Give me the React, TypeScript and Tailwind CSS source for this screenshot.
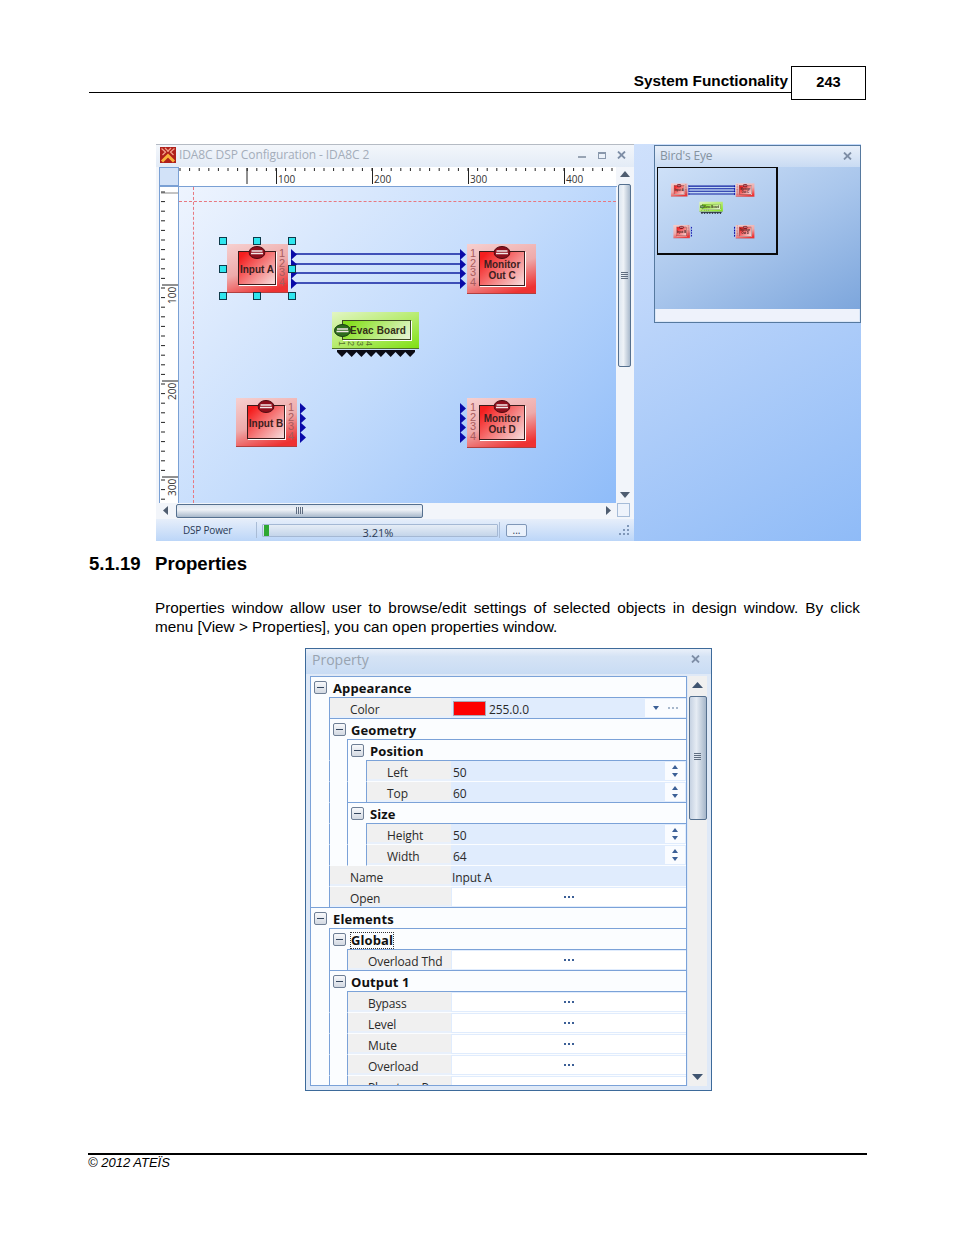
const uiFont = "font-['Open_Sans',sans-serif]";

const POSITION_LINE = "border-[#7ba2d8]";

function Tri({ dir, className }: { dir: "up" | "down" | "left" | "right"; className?: string }) {
  const points = {
    up: "0,6 5,0 10,6",
    down: "0,0 10,0 5,6",
    left: "6,0 6,10 0,5",
    right: "0,0 0,10 6,5",
  }[dir];
  const box = dir === "up" || dir === "down" ? "0 0 10 6" : "0 0 6 10";
  return (
    <svg viewBox={box} className={className} fill="currentColor" preserveAspectRatio="none">
      <polygon points={points} />
    </svg>
  );
}

function CloseX({ className }: { className?: string }) {
  return (
    <svg viewBox="0 0 9 8" className={`w-[9px] h-[8px] ${className ?? ""}`} stroke="currentColor" strokeWidth="1.8" fill="none">
      <path d="M1 0.5l7 7M8 0.5l-7 7" />
    </svg>
  );
}

function Oval({ green, className }: { green?: boolean; className?: string }) {
  return (
    <svg viewBox="0 0 17 13" className={className}>
      <ellipse cx="8.5" cy="6.5" rx="8" ry="6" fill={green ? "#2f6d1e" : "#8e0f1c"} stroke={green ? "#173d10" : "#4d0a10"} />
      <path d="M3 5h11M2.5 7.5h12" stroke="#f4e8e8" strokeWidth="1.4" />
    </svg>
  );
}

function Ports() {
  return (
    <div className="flex flex-col text-[#0a0aa8]">
      {[0, 1, 2, 3].map((i) => (
        <Tri key={i} dir="right" className={`w-[6px] h-[11px] ${i > 0 ? "-mt-[1.4px]" : ""}`} />
      ))}
    </div>
  );
}

type NodeProps = {
  x: number;
  y: number;
  w: number;
  h: number;
  lines: string[];
  side: "left" | "right";
};

// red DSP block, numbers on the side that has the ports
function Block({ x, y, w, h, lines, side }: NodeProps) {
  const nums = (
    <div className="w-[12px] -mt-[2px] flex flex-col items-center text-[11px] leading-[9.6px] text-[#a85c5e] font-['Liberation_Sans',sans-serif]">
      {[1, 2, 3, 4].map((n) => (
        <span key={n}>{n}</span>
      ))}
    </div>
  );
  return (
    <div className="absolute flex items-center" style={{ left: x, top: y, width: w + 20 }}>
      {side === "left" && (
        <div className="absolute -left-[7px] top-[5px]">
          <Ports />
        </div>
      )}
      <div
        className="flex bg-[linear-gradient(162deg,#f6d0d0_0%,#eeaaaa_50%,#ee3232_90%)] border-b border-[#b04040] pt-[7px] pb-[7px]"
        style={{ width: w, height: h }}
      >
        {side === "left" ? nums : <div className="w-[11px]" />}
        <div className="relative flex-1 border border-[#3a1c1c] shadow-[1px_1px_0_#fff] bg-[linear-gradient(135deg,#f51e1e_10%,#f58c8c_60%,#f6dede_100%)] pt-[3px] flex flex-col items-center justify-center text-[10px] leading-[11.5px] font-bold text-[#3c2020] font-['Liberation_Sans',sans-serif]">
          <Oval className="absolute -top-[6px] left-1/2 -translate-x-1/2 w-[17px] h-[13px]" />
          {lines.map((l) => (
            <span key={l}>{l}</span>
          ))}
        </div>
        {side === "right" ? nums : <div className="w-[11px]" />}
      </div>
      {side === "right" && (
        <div className="absolute top-[5px]" style={{ left: w + 3 }}>
          <Ports />
        </div>
      )}
    </div>
  );
}

function EvacBoard({ x, y }: { x: number; y: number }) {
  return (
    <div className="absolute w-[87px]" style={{ left: x, top: y }}>
      <div className="h-[37px] border-b border-[#50702a] bg-[linear-gradient(160deg,#e2f5c4_0%,#b7ec70_50%,#7fe014_100%)] pl-[10px] pr-[8px] pt-[8px]">
        <div className="relative h-[20px] border border-[#3d4a24] shadow-[1px_1px_0_#fff] bg-[linear-gradient(135deg,#86e01e_10%,#eaf5da_100%)] pl-[7px] flex items-center text-[10px] font-bold tracking-[0.1px] text-[#332e18] font-['Liberation_Sans',sans-serif]">
          <Oval green className="absolute -left-[9px] top-[3px] w-[17px] h-[13px]" />
          <span className="whitespace-nowrap">Evac Board</span>
        </div>
      </div>
      <div className="absolute left-[7px] top-[27px] flex gap-[4px] text-[9px] leading-[9px] text-[#56702a] font-['Liberation_Sans',sans-serif]">
        {[1, 2, 3, 4].map((n) => (
          <span key={n} className="rotate-90">
            {n}
          </span>
        ))}
      </div>
      <svg viewBox="0 0 78 7" className="ml-[5px] mt-[1px] w-[78px] h-[7px]" fill="#0b0b14">
        <rect y="0" width="78" height="2" />
        {Array.from({ length: 8 }, (_, i) => (
          <polygon key={i} points={`${i * 9.75},2 ${i * 9.75 + 4.9},7 ${(i + 1) * 9.75},2`} />
        ))}
      </svg>
    </div>
  );
}

function Handle({ x, y }: { x: number; y: number }) {
  return <div className="absolute w-[8px] h-[8px] bg-[#2fe6ee] border border-[#0e3a4a]" style={{ left: x, top: y }} />;
}

// canvas coordinates: 0,0 is the top left of the design area
function Diagram({ selected, mini }: { selected?: boolean; mini?: boolean }) {
  return (
    <div className="relative w-[437px] h-[316px]">
      <svg className="absolute left-0 top-0 w-[437px] h-[316px]" viewBox="0 0 437 316" fill="none" stroke="#0f1fa0" strokeWidth={mini ? 4 : 1.4}>
        {[67, 77, 86, 96].map((y) => (
          <line key={y} x1="115" x2="283" y1={y} y2={y} />
        ))}
      </svg>
      <Block x={48} y={57} w={61} h={49} lines={["Input A"]} side="right" />
      <Block x={288} y={57} w={69} h={50} lines={["Monitor", "Out C"]} side="left" />
      <EvacBoard x={153} y={125} />
      <Block x={57} y={211} w={61} h={49} lines={["Input B"]} side="right" />
      <Block x={288} y={211} w={69} h={50} lines={["Monitor", "Out D"]} side="left" />
      {selected &&
        [40, 74, 109].flatMap((x) =>
          [50, 78, 105].map((y) => (x === 74 && y === 78 ? null : <Handle key={`${x}-${y}`} x={x} y={y} />)),
        )}
    </div>
  );
}

function TopRuler() {
  const ticks = Array.from({ length: 46 }, (_, i) => 1 + i * 9.6);
  return (
    <svg viewBox="0 0 437 19" className="w-[437px] h-[19px] block">
      {ticks.map((t) => (
        <line key={t} x1={t} x2={t} y1="1" y2="4" stroke="#222" />
      ))}
      {[68, 97.5, 193.5, 289.5, 385.5].map((t) => (
        <line key={t} x1={t} x2={t} y1="1" y2="17" stroke="#222" />
      ))}
      {[100, 200, 300, 400].map((n, i) => (
        <text key={n} x={99 + i * 96} y="16" fontSize="10" fill="#333" fontFamily="'Open Sans',sans-serif">
          {n}
        </text>
      ))}
    </svg>
  );
}

function LeftRuler() {
  const ticks = Array.from({ length: 33 }, (_, i) => 1 + i * 9.6);
  return (
    <svg viewBox="0 0 19 316" className="w-[19px] h-[316px] block">
      <line x1="1" x2="18" y1="6" y2="6" stroke="#888" />
      {ticks.map((t) => (
        <line key={t} x1="1" x2="5" y1={t + 4} y2={t + 4} stroke="#222" />
      ))}
      {[98, 194, 290].map((t) => (
        <line key={t} x1="2" x2="18" y1={t} y2={t} stroke="#222" />
      ))}
      {[100, 200, 300].map((n, i) => (
        <text
          key={n}
          transform={`translate(16 ${117 + i * 96}) rotate(-90)`}
          fontSize="10"
          fill="#333"
          fontFamily="'Open Sans',sans-serif"
        >
          {n}
        </text>
      ))}
    </svg>
  );
}

function Grip({ vertical }: { vertical?: boolean }) {
  return (
    <div className={`flex ${vertical ? "flex-col gap-[1px]" : "gap-[1px]"}`}>
      {[0, 1, 2, 3].map((i) => (
        <div key={i} className={`${vertical ? "w-[7px] h-[1px]" : "w-[1px] h-[7px]"} bg-[#5f6d80]`} />
      ))}
    </div>
  );
}

function DesignWindow() {
  return (
    <div className={`w-[478px] h-[397px] flex flex-col bg-[#f2f5fa] border-t border-[#b5bbc4] ${uiFont}`}>
      <div className="h-[22px] flex items-center bg-[linear-gradient(180deg,#f3f6fb,#e3ebf6)] pl-[4px] pr-[8px] pb-[2px]">
        <svg viewBox="0 0 16 16" className="w-[16px] h-[16px]">
          <rect width="16" height="16" fill="#b0201a" />
          <path d="M2 14.5l6-6 6 6" stroke="#f9b23c" strokeWidth="3" fill="none" />
          <path d="M1.5 1.5l4 3.5-3 3M5 1l3.5 3.5" stroke="#f3a08a" strokeWidth="1.3" fill="none" />
          <path d="M14.5 1.5l-4 3.5 3 3M11 1L7.5 4.5" stroke="#f3a08a" strokeWidth="1.3" fill="none" />
        </svg>
        <span className="ml-[3px] flex-1 text-[12px] tracking-[-0.1px] text-[#a4adba] whitespace-nowrap">IDA8C DSP Configuration - IDA8C 2</span>
        <div className="w-[8px] h-[2px] bg-[#98a4b4] mt-[3px]" />
        <div className="ml-[12px] w-[8px] h-[7px] border border-t-2 border-[#8a98ac]" />
        <CloseX className="ml-[11px] text-[#7e8ea6]" />
      </div>
      <div className="flex pl-[3px]">
        <div className="w-[458px] flex flex-col">
          <div className="h-[20px] flex border-b border-[#7aa0d4]">
            <div className="w-[20px] bg-[#d2e2f8] border border-[#7aa0d4]" />
            <div className="bg-white">
              <TopRuler />
            </div>
          </div>
          <div className="h-[316px] flex">
            <div className="w-[20px] bg-white border-x border-[#7aa0d4]">
              <LeftRuler />
            </div>
            <div className="relative w-[437px] h-[316px] bg-[linear-gradient(135deg,#eef4fe_0%,#c4dcfc_50%,#8fbcf9_100%)]">
              <div className="absolute left-0 right-0 top-[14px] border-t border-dashed border-[#e87880]" />
              <div className="absolute top-0 bottom-0 left-[14px] border-l border-dashed border-[#e87880]" />
              <Diagram selected />
            </div>
          </div>
          <div className="h-[15px] flex items-center bg-[#f2f5fa]">
            <Tri dir="left" className="ml-[4px] w-[5px] h-[9px] text-[#4f5d70]" />
            <div className="ml-[8px] w-[247px] h-[14px] rounded-[2px] border border-[#55708f] flex items-center justify-center bg-[linear-gradient(180deg,#dde6f0,#eef2f7_40%,#a9b9cb)]">
              <Grip />
            </div>
            <div className="flex-1" />
            <Tri dir="right" className="mr-[6px] w-[5px] h-[9px] text-[#4f5d70]" />
          </div>
        </div>
        <div className="w-[15px] flex flex-col items-center bg-[#f2f5fa]">
          <Tri dir="up" className="mt-[4px] w-[10px] h-[6px] text-[#4f5d70]" />
          <div className="mt-[7px] w-[13px] h-[183px] rounded-[2px] border border-[#55708f] flex items-center justify-center bg-[linear-gradient(90deg,#dde6f0,#eef2f7_40%,#a9b9cb)]">
            <Grip vertical />
          </div>
          <Tri dir="down" className="mt-[125px] w-[10px] h-[6px] text-[#4f5d70]" />
          <div className="mt-[5px] ml-[-2px] w-[13px] h-[14px] bg-[#eef3fb] border border-[#a6bcd8]" />
        </div>
      </div>
      <div className="mt-[1px] flex-1 flex items-center bg-[linear-gradient(180deg,#e6eefa,#bcd6f8)] text-[10px] text-[#2a3a55]">
        <span className="ml-[27px] w-[73px] tracking-[-0.2px] whitespace-nowrap">DSP Power</span>
        <div className="h-[16px] border-l border-[#a9bcd6]" />
        <div className="ml-[5px] w-[236px] h-[13px] border border-[#a4b8d4] rounded-[1px] bg-[linear-gradient(180deg,#e6edf6,#c4d5ea)] flex">
          <div className="ml-[1px] w-[5px] bg-[#2ea832]" />
          <span className="flex-1 text-center pr-[10px] leading-[15px] text-[11px]">3.21%</span>
        </div>
        <div className="ml-[1px] h-[16px] border-l border-[#a9bcd6]" />
        <div className="ml-[6px] w-[21px] h-[13px] border border-[#7f97b8] rounded-[2px] bg-[#eaf1fb] text-center leading-[10px]">...</div>
        <div className="flex-1" />
        <div className="mr-[4px] grid grid-cols-3 gap-[1px] w-[11px] h-[11px]">
          {[0, 0, 1, 0, 1, 1, 1, 1, 1].map((on, i) => (
            <div key={i} className={`w-[2px] h-[2px] ${on ? "bg-[#7f97b8]" : ""}`} />
          ))}
        </div>
      </div>
    </div>
  );
}

function BirdsEye() {
  return (
    <div className={`ml-[20px] mt-[1px] w-[207px] h-[178px] flex flex-col border border-[#56799f] bg-[#dbe7f7] ${uiFont}`}>
      <div className="h-[21px] flex items-center justify-between pl-[5px] pr-[8px] pb-[1px] bg-[linear-gradient(180deg,#e8eff9,#c9dbf3)]">
        <span className="text-[12px] tracking-[-0.15px] text-[#84929f]">Bird's Eye</span>
        <CloseX className="text-[#7e8ea6]" />
      </div>
      <div className="h-[142px] pl-[2px] bg-[linear-gradient(150deg,#cfe1f8_0%,#a9c6ec_50%,#7da6dc_100%)]">
        <div className="w-[121px] h-[88px] border-l border-t border-r-2 border-b-2 border-[#0a0a0a] overflow-hidden">
          <div className="origin-top-left scale-[0.27]">
            <Diagram mini />
          </div>
        </div>
      </div>
      <div className="flex-1 mx-[1px] mb-[1px] bg-[#eef2fb]" />
    </div>
  );
}

type Row =
  | { group: string; depth: number; lineFrom: number; focus?: boolean }
  | { label: string; depth: number; lineFrom?: number; value?: string; control?: "color" | "spin" | "more" };

const rows: Row[] = [
  { group: "Appearance", depth: 0, lineFrom: 1 },
  { label: "Color", depth: 1, lineFrom: 1, value: "255.0.0", control: "color" },
  { group: "Geometry", depth: 1, lineFrom: 2 },
  { group: "Position", depth: 2, lineFrom: 3 },
  { label: "Left", depth: 3, value: "50", control: "spin" },
  { label: "Top", depth: 3, lineFrom: 2, value: "60", control: "spin" },
  { group: "Size", depth: 2, lineFrom: 3 },
  { label: "Height", depth: 3, value: "50", control: "spin" },
  { label: "Width", depth: 3, value: "64", control: "spin" },
  { label: "Name", depth: 1, value: "Input A" },
  { label: "Open", depth: 1, lineFrom: 0, control: "more" },
  { group: "Elements", depth: 0, lineFrom: 1 },
  { group: "Global", depth: 1, lineFrom: 2, focus: true },
  { label: "Overload Thd", depth: 2, lineFrom: 1, control: "more" },
  { group: "Output 1", depth: 1, lineFrom: 2 },
  { label: "Bypass", depth: 2, control: "more" },
  { label: "Level", depth: 2, control: "more" },
  { label: "Mute", depth: 2, control: "more" },
  { label: "Overload", depth: 2, control: "more" },
  { label: "Phantom Power", depth: 2, control: "more" },
];

const indent = [18, 18, 19, 18];

function Spacers({ depth, lineFrom }: { depth: number; lineFrom: number }) {
  return (
    <>
      {Array.from({ length: depth }, (_, i) => (
        <div
          key={i}
          className={`h-full shrink-0 border-b ${i > 0 ? `border-l ${POSITION_LINE}` : ""} ${lineFrom <= i ? POSITION_LINE : i > 0 ? "[border-bottom-color:transparent]" : "border-transparent"}`}
          style={{ width: indent[i] }}
        />
      ))}
    </>
  );
}

function Dots({ pale }: { pale?: boolean }) {
  return (
    <div className="flex gap-[2px]">
      {[0, 1, 2].map((i) => (
        <div key={i} className={`w-[2px] h-[2px] ${pale ? "bg-[#a8b8cc]" : "bg-[#3b5f96]"}`} />
      ))}
    </div>
  );
}

function PropertyRow({ row }: { row: Row }) {
  if ("group" in row) {
    return (
      <div className="h-[21px] flex">
        <Spacers depth={row.depth} lineFrom={row.lineFrom} />
        <div
          className={`h-full shrink-0 flex items-center pl-[3px] ${row.depth > 0 ? `border-l ${POSITION_LINE}` : ""}`}
          style={{ width: indent[row.depth] }}
        >
          <div className="w-[13px] h-[13px] shrink-0 rounded-[2px] border border-[#6f7f95] bg-[linear-gradient(180deg,#f8f9fb,#d3d9e2)] flex items-center justify-center">
            <div className="w-[7px] h-[1px] bg-[#34465e]" />
          </div>
        </div>
        <div className={`flex-1 h-full flex items-center border-b ${POSITION_LINE} pl-[4px] pt-[2px]`}>
          <span
            className={`text-[13px] tracking-[0.1px] font-bold text-[#101010] leading-[15px] ${row.focus ? "outline-1 outline-dotted outline-[#333]" : ""}`}
          >
            {row.group}
          </span>
        </div>
      </div>
    );
  }
  const line = row.lineFrom ?? 99;
  return (
    <div className="h-[21px] flex">
      <Spacers depth={row.depth} lineFrom={line} />
      <div className={`flex-1 min-w-0 flex h-full border-l ${POSITION_LINE} border-b ${line <= row.depth ? "" : "[border-bottom-color:transparent]"}`}>
        <div className="flex-1 min-w-0 h-full pb-[2px] bg-[#e8f0fb]">
          <div className="h-full bg-[#f0f0f0] pl-[20px] pt-[5px] flex items-center text-[12px] tracking-[-0.1px] text-[#2a2a2a] whitespace-nowrap">{row.label}</div>
        </div>
        <div className="w-[235px] shrink-0 h-full bg-[#e0ecfd] flex items-center text-[12px] tracking-[-0.1px] text-[#2a2a2a]">
          {row.control === "color" && (
            <>
              <div className="ml-[2px] w-[33px] h-[15px] bg-[#fe0000] border border-[#a9a9b8]" />
              <span className="ml-[3px] flex-1 pt-[3px]">{row.value}</span>
              <div className="w-[41px] h-[18px] bg-[#fafcff] flex items-center justify-center gap-[9px]">
                <Tri dir="down" className="w-[6px] h-[4px] text-[#3b5f96]" />
                <Dots pale />
              </div>
            </>
          )}
          {row.control === "spin" && (
            <>
              <span className="ml-[2px] flex-1 pt-[3px]">{row.value}</span>
              <div className="mr-[1px] w-[20px] h-[18px] bg-[#fafcff] flex flex-col items-center justify-center gap-[4px]">
                <Tri dir="up" className="w-[6px] h-[4px] text-[#3b5f96]" />
                <Tri dir="down" className="w-[6px] h-[4px] text-[#3b5f96]" />
              </div>
            </>
          )}
          {row.control === "more" && (
            <div className="w-full h-[18px] self-start mt-[1px] ml-[1px] bg-white flex items-center justify-center">
              <Dots />
            </div>
          )}
          {!row.control && <span className="ml-[1px] pt-[3px]">{row.value}</span>}
        </div>
      </div>
    </div>
  );
}

function PropertyWindow() {
  return (
    <div className={`mt-[12px] ml-[305px] w-[407px] h-[443px] flex flex-col border border-[#3d6a9a] bg-[#dfe9f7] ${uiFont}`}>
      <div className="h-[25px] shrink-0 flex items-center justify-between pl-[6px] pr-[11px] pb-[5px] bg-[linear-gradient(180deg,#eaf0f9_0%,#d5e3f5_30%,#c9dcf4_100%)]">
        <span className="text-[14px] text-[#98a3b0]">Property</span>
        <CloseX className="text-[#7e8ea6]" />
      </div>
      <div className="h-[412px] mt-[2px] ml-[4px] flex">
        <div className="w-[377px] h-[410px] overflow-hidden bg-[#fbfdff] border border-[#7ba2d8]">
          {rows.map((r, i) => (
            <PropertyRow key={i} row={r} />
          ))}
        </div>
        <div className="ml-[1px] w-[19px] h-[410px] bg-[#f0f0f0] flex flex-col items-center">
          <Tri dir="up" className="mt-[6px] w-[11px] h-[6px] text-[#3f5470]" />
          <div className="mt-[8px] w-[18px] h-[124px] rounded-[2px] border border-[#55708f] flex items-center justify-center pb-[4px] bg-[linear-gradient(90deg,#c6d2e2,#e6ecf4_40%,#a5b6ca)]">
            <Grip vertical />
          </div>
          <Tri dir="down" className="mt-[254px] w-[11px] h-[6px] text-[#3f5470]" />
        </div>
      </div>
    </div>
  );
}

export default function App() {
  return (
    <div className="w-[954px] h-[1235px] bg-white text-black font-['Liberation_Sans',sans-serif] flex flex-col overflow-hidden">
      <header className="mt-[66px] ml-[89px] w-[777px] h-[34px] flex items-start">
        <div className="flex-1 h-[27px] border-b border-black flex items-center justify-end pr-[3px] text-[15.33px] font-bold pt-[4px]">
          System Functionality
        </div>
        <div className="w-[75px] h-[34px] border border-black flex items-center justify-center text-[14.67px] font-bold pb-[2px]">243</div>
      </header>

      <div className="mt-[44px] ml-[156px] w-[705px] h-[397px] flex items-start bg-[linear-gradient(150deg,#e4eefd_0%,#c8dcfb_45%,#8fbbf7_100%)]">
        <DesignWindow />
        <BirdsEye />
      </div>

      <h2 className="mt-[12px] ml-[89px] h-[22px] flex items-center text-[18.6px] font-bold">
        <span className="w-[66px]">5.1.19</span>
        <span>Properties</span>
      </h2>

      <p className="mt-[23px] ml-[155px] w-[705px] text-[15.3px] leading-[19px] text-justify">
        Properties window allow user to browse/edit settings of selected objects in design window. By click menu [View &gt; Properties], you can open properties window.
      </p>

      <PropertyWindow />

      <footer className="mt-[62px] ml-[88px] w-[779px] border-t-2 border-black text-[13px] italic leading-[14px] pt-[1px]">© 2012 ATEÏS</footer>
    </div>
  );
}
